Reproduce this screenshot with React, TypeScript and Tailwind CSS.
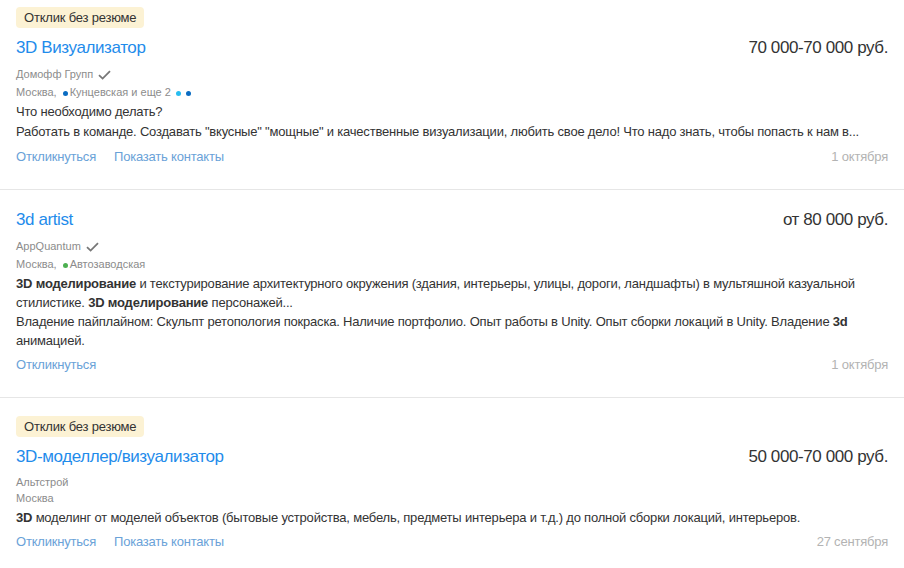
import { ReactNode } from "react";

interface VacancyProps {
  noResume?: boolean;
  title: string;
  salary: string;
  company: string;
  verified?: boolean;
  location: ReactNode;
  children: ReactNode;
  showContacts?: boolean;
  date: string;
  first?: boolean;
}

const Dot = ({ color, className }: { color: string; className: string }) => (
  <span className={`inline-block w-[5px] h-[5px] rounded-full align-middle ${className}`} style={{ backgroundColor: color }} />
);

const Check = () => (
  <svg width="13" height="10" viewBox="0 0 13 10" className="ml-[5px]" fill="none">
    <path d="M1 5.2 L4.6 8.6 L12 1.2" stroke="#777" strokeWidth="1.8" />
  </svg>
);

function Vacancy({ noResume, title, salary, company, verified, location, children, showContacts, date, first }: VacancyProps) {
  return (
    <div className={`px-4 pb-[22px] ${first ? "pt-[7px]" : "pt-[18px] border-t border-[#e6e6e6]"}`}>
      {noResume && (
        <div className="flex mb-2">
          <span className="bg-[#fcf2d4] rounded-sm px-2 h-[21px] leading-[21px] text-[13px] tracking-[-0.2px] text-[#333]">
            Отклик без резюме
          </span>
        </div>
      )}
      <div className="flex justify-between items-center leading-6 text-[17px] tracking-[-0.4px] mb-[5px]">
        <span className="text-[#1f8ceb]">{title}</span>
        <span className="text-[#333]">{salary}</span>
      </div>
      <div className={`flex items-center text-[11px] text-[#8c8c8c] ${verified ? "h-[19px]" : "h-4"}`}>
        {company}
        {verified && <Check />}
      </div>
      <div className="text-[11px] leading-4 text-[#8c8c8c]">{location}</div>
      <div className="mt-[2px] text-[13px] tracking-[-0.2px] leading-[19px] text-[#333]">{children}</div>
      <div className="flex items-center justify-between mt-[5px] text-[13px] tracking-[-0.2px] leading-5">
        <div className="flex gap-[18px] text-[#6aa2d8]">
          <span>Откликнуться</span>
          {showContacts && <span>Показать контакты</span>}
        </div>
        <span className="text-[#b3b3b3]">{date}</span>
      </div>
    </div>
  );
}

export default function App() {
  return (
    <div className="w-[904px] h-[568px] bg-white overflow-hidden" style={{ fontFamily: '"Liberation Sans", Arial, sans-serif' }}>
      <Vacancy
        first
        noResume
        title="3D Визуализатор"
        salary="70 000-70 000 руб."
        company="Домофф Групп"
        verified
        location={
          <>
            Москва,
            <Dot color="#0a6cc2" className="ml-[6px] mr-[2px]" />
            Кунцевская и еще 2
            <Dot color="#27bdf0" className="ml-[5px]" />
            <Dot color="#0a6cc2" className="ml-[5px]" />
          </>
        }
        showContacts
        date="1 октября"
      >
        <p className="leading-5">Что необходимо делать?</p>
        <p className="leading-5">
          Работать в команде. Создавать "вкусные" "мощные" и качественные визуализации, любить свое дело! Что надо знать, чтобы попасть к нам в...
        </p>
      </Vacancy>
      <Vacancy
        title="3d artist"
        salary="от 80 000 руб."
        company="AppQuantum"
        verified
        location={
          <>
            Москва,
            <Dot color="#4caf50" className="ml-[6px] mr-[2px]" />
            Автозаводская
          </>
        }
        date="1 октября"
      >
        <p>
          <b>3D моделирование</b> и текстурирование архитектурного окружения (здания, интерьеры, улицы, дороги, ландшафты) в мультяшной казуальной стилистике. <b>3D моделирование</b> персонажей...
        </p>
        <p>
          Владение пайплайном: Скульпт ретопология покраска. Наличие портфолио. Опыт работы в Unity. Опыт сборки локаций в Unity. Владение <b>3d</b> анимацией.
        </p>
      </Vacancy>
      <Vacancy
        noResume
        title="3D-моделлер/визуализатор"
        salary="50 000-70 000 руб."
        company="Альтстрой"
        location="Москва"
        showContacts
        date="27 сентября"
      >
        <p>
          <b>3D</b> моделинг от моделей объектов (бытовые устройства, мебель, предметы интерьера и т.д.) до полной сборки локаций, интерьеров.
        </p>
      </Vacancy>
    </div>
  );
}
